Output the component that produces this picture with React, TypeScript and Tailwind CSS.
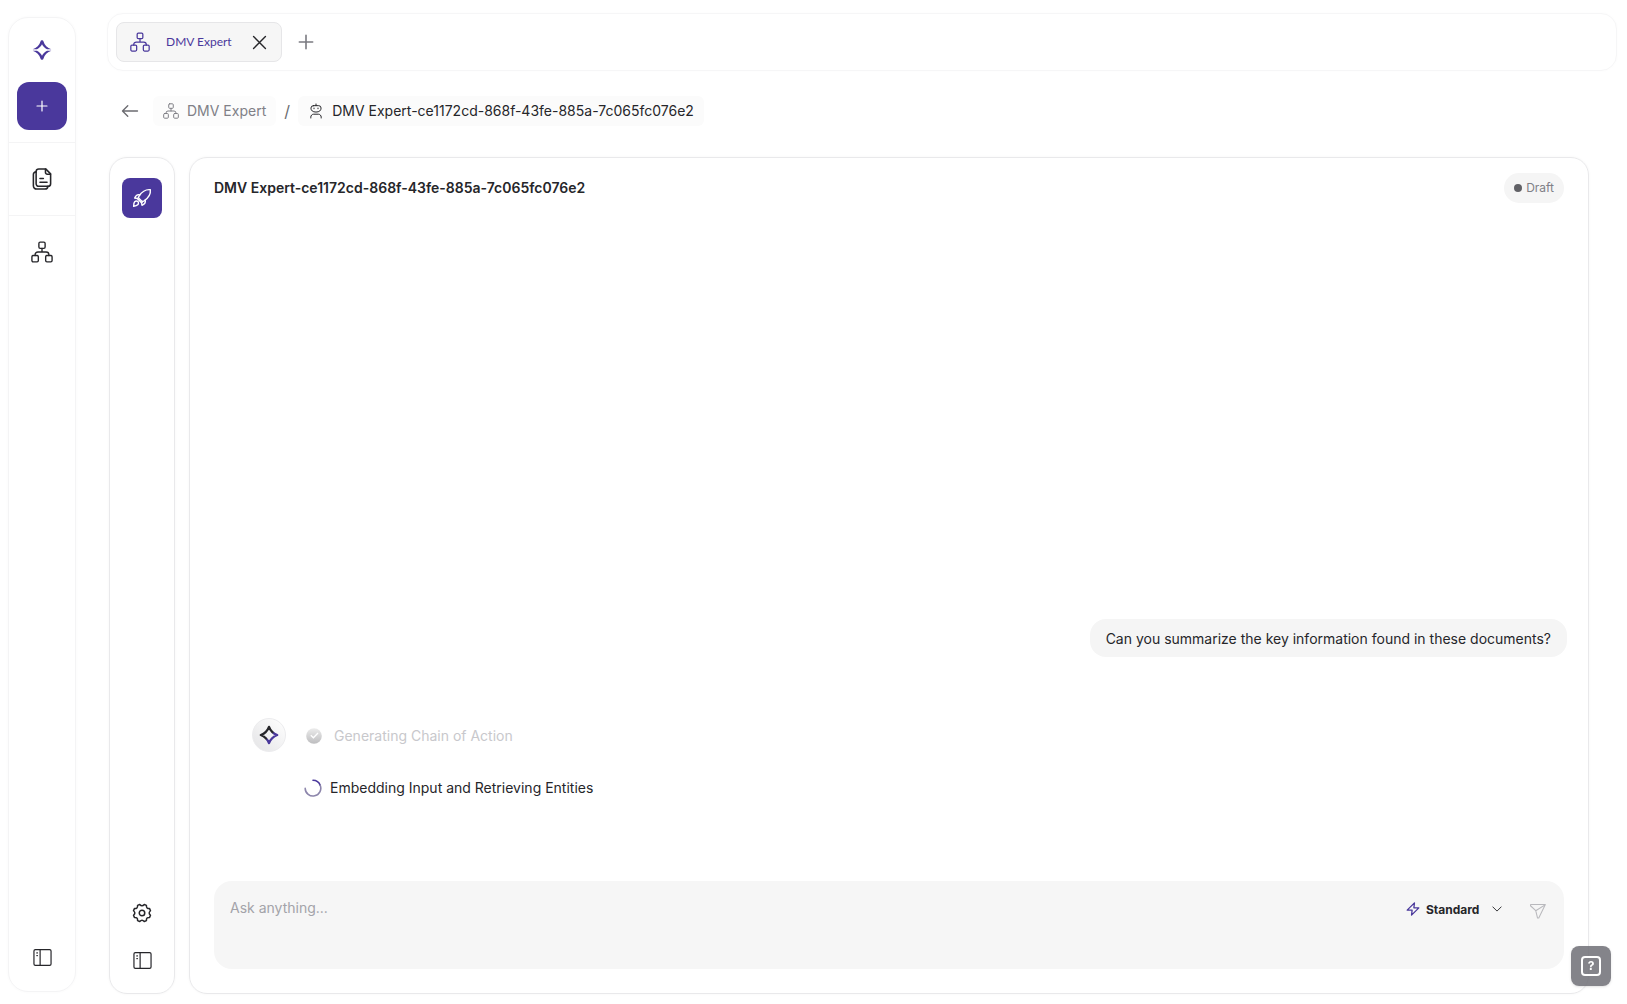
import type { ReactNode } from 'react';

type IconProps = { className?: string };

function Stroke({ className, width = 1.5, children }: IconProps & { width?: number; children: ReactNode }) {
  return (
    <svg
      viewBox="0 0 24 24"
      fill="none"
      stroke="currentColor"
      strokeWidth={width}
      strokeLinecap="round"
      strokeLinejoin="round"
      className={className}
      aria-hidden="true"
    >
      {children}
    </svg>
  );
}

function NetworkIcon({ className }: IconProps) {
  return (
    <Stroke className={className}>
      <rect x="8.6" y="1.2" width="6.8" height="6.8" rx="1.4" />
      <rect x="1" y="15.8" width="7" height="7" rx="1.4" />
      <rect x="16" y="15.8" width="7" height="7" rx="1.4" />
      <path d="M12 8v4M4.5 15.8V15a3 3 0 0 1 3-3h9a3 3 0 0 1 3 3v.8" />
    </Stroke>
  );
}

function DocsIcon({ className }: IconProps) {
  return (
    <Stroke className={className} width={1.7}>
      <path d="M16 1H8.400A2.800 2.800 0 0 0 5.600 3.800v13.400A2.800 2.800 0 0 0 8.400 20h10.200a2.800 2.800 0 0 0 2.800-2.800V6.400z" />
      <path d="M15.800 1.200v3.600a2 2 0 0 0 2 2h3.400M9.800 11.400h3.700M9.800 15.600h7.700" />
      <path d="M5.600 4.200a2.900 2.900 0 0 0-3 2.900v12.300A3.500 3.500 0 0 0 6.100 23h9.300a3.200 3.200 0 0 0 3-3" />
    </Stroke>
  );
}

function PanelIcon({ className }: IconProps) {
  return (
    <Stroke className={className}>
      <rect x="1.2" y="2" width="21.6" height="20" rx="1.8" />
      <path d="M9 2v20" />
      <path d="M4.8 6.2h.8M4.8 9.6h.8" />
    </Stroke>
  );
}

function RobotIcon({ className }: IconProps) {
  return (
    <Stroke className={className}>
      <path d="M8 4h8a3.600 3.600 0 0 1 3.600 3.600c0 3.600-2.600 6-7.600 6s-7.600-2.400-7.600-6A3.600 3.600 0 0 1 8 4z" />
      <path d="M12 1.500V4M9 7.600v1M15 7.600v1" />
      <path d="M4.200 22.500v-1.300c0-2.400 1.800-4.400 4.200-4.400h7.200c2.400 0 4.200 2 4.200 4.400v1.300" />
    </Stroke>
  );
}

function RocketIcon({ className }: IconProps) {
  return (
    <Stroke className={className} width={1.7}>
      <path d="M22 2c-5-.6-9.600 1.800-13.400 7.400L7.600 11.600l4.800 4.800 2.200-1C20.200 11.600 22.600 7 22 2z" />
      <path d="M9.400 8.200C6.800 7.400 4.600 8.800 3.200 12l3.200.6M15.800 14.600c.8 2.600-.6 4.800-3.800 6.200l-.6-3.200" />
      <path d="M6.400 12.600l5 5 1.400-1.400M3.200 16.600c1.200-1.200 3-1.200 3.900-.3s.9 2.700-.3 3.900C5.600 21.400 2 22 2 22s0-4.200 1.200-5.400z" />
    </Stroke>
  );
}

function GearIcon({ className }: IconProps) {
  return (
    <Stroke className={className} width={1.8}>
      <path d="M9.300 1.800Q12 5 14.700 1.800L17.300 2.900Q17 7 21.100 6.700L22.200 9.300Q19 12 22.200 14.700L21.100 17.300Q17 17 17.300 21.100L14.700 22.200Q12 19 9.300 22.200L6.700 21.100Q7 17 2.900 17.300L1.800 14.700Q5 12 1.800 9.300L2.900 6.700Q7 7 6.700 2.900z" />
      <circle cx="12" cy="12" r="3.300" />
    </Stroke>
  );
}

function Sparkle({ className }: IconProps) {
  return (
    <svg viewBox="0 0 24 24" fill="currentColor" className={className} aria-hidden="true">
      <path d="M.8 11.200C5.600 9.800 9 6.200 10.300 1.600c.4-1.600 3-1.600 3.400 0C15 6.200 18.400 9.800 23.200 11.200H18C15.200 9.600 13.200 7.600 12 5.200 10.800 7.600 8.800 9.600 6 11.200z" />
      <path d="M.8 12.800C5.600 14.200 9 17.800 10.300 22.400c.4 1.600 3 1.600 3.400 0C15 17.800 18.400 14.200 23.200 12.800H18C15.200 14.400 13.200 16.400 12 18.800 10.800 16.400 8.800 14.400 6 12.800z" />
    </svg>
  );
}

function AvatarMark({ className }: IconProps) {
  return (
    <svg viewBox="0 0 24 24" className={className} aria-hidden="true">
      <defs>
        <linearGradient id="avatar-mark" x1="0" y1="0" x2="1" y2="1">
          <stop offset="0.52" stopColor="#26262a" />
          <stop offset="0.6" stopColor="#4a389c" />
        </linearGradient>
      </defs>
      <path
        fill="none"
        stroke="url(#avatar-mark)"
        strokeWidth="2.8"
        strokeLinejoin="round"
        d="M12 2.200C13.800 7 17 10.200 21.800 12 17 13.800 13.800 17 12 21.800 10.200 17 7 13.800 2.200 12 7 10.200 10.200 7 12 2.200z"
      />
    </svg>
  );
}

function Sidebar() {
  return (
    <aside className="flex w-[68px] shrink-0 flex-col items-center rounded-[20px] border border-[#f4f4f5] shadow-[0_0_3px_rgba(0,0,0,0.03)]">
      <a href="#home" aria-label="Home" className="mt-[22px] text-[#4a389c]">
        <Sparkle className="size-5" />
      </a>
      <button
        aria-label="New"
        className="mt-[22px] flex h-12 w-[50px] items-center justify-center rounded-xl bg-[#4a389c] text-white"
      >
        <Stroke className="size-3" width={2.4}>
          <path d="M12 2v20M2 12h20" />
        </Stroke>
      </button>
      <nav className="mt-3 flex w-full flex-col text-[#26262a]">
        <a href="#documents" aria-label="Documents" className="flex h-[74px] items-center justify-center border-y border-[#f4f4f5]">
          <DocsIcon className="size-[22px]" />
        </a>
        <a href="#workflows" aria-label="Workflows" className="flex h-[72px] items-center justify-center">
          <NetworkIcon className="size-[22px]" />
        </a>
      </nav>
      <button aria-label="Toggle sidebar" className="mt-auto mb-6 text-[#26262a]">
        <PanelIcon className="size-[19px]" />
      </button>
    </aside>
  );
}

function TabBar() {
  return (
    <header className="flex h-[58px] items-center rounded-[16px] border border-[#f6f6f7] px-2 shadow-[0_0_3px_rgba(0,0,0,0.02)]">
      <div className="flex h-10 items-center rounded-lg border border-[#e6e6e8] bg-[#f6f6f6] pr-[14px] pl-[13px]">
        <button className="flex items-center gap-4 font-['Lato',sans-serif] text-xs text-[#4a389c]">
          <NetworkIcon className="size-5" />
          DMV Expert
        </button>
        <button aria-label="Close tab" className="ml-5 text-[#26262a]">
          <Stroke className="size-[15px]" width={2.2}>
            <path d="M2.5 2.5l19 19M21.5 2.5l-19 19" />
          </Stroke>
        </button>
      </div>
      <button aria-label="Add tab" className="ml-4 text-[#7a7a80]">
        <Stroke className="size-4" width={2.4}>
          <path d="M12 2v20M2 12h20" />
        </Stroke>
      </button>
    </header>
  );
}

function Breadcrumb() {
  return (
    <nav aria-label="Breadcrumb" className="mt-[25px] flex h-[30px] items-center pl-[14px] text-sm">
      <button aria-label="Back" className="text-[#6b6b70]">
        <Stroke className="size-[18px]" width={1.8}>
          <path d="M22 12H2.5M9 5l-7 7 7 7" />
        </Stroke>
      </button>
      <a href="#workflow" className="ml-[14px] flex h-full items-center gap-2 rounded-md bg-[#fcfcfc] px-[10px] text-[#808087]">
        <NetworkIcon className="size-4" />
        DMV Expert
      </a>
      <span className="w-[22px] text-center text-base text-[#6b6b70]">/</span>
      <a href="#agent" aria-current="page" className="flex h-full items-center gap-2 rounded-md bg-[#fbfbfb] px-[10px] text-[#26262a]">
        <RobotIcon className="size-4" />
        DMV Expert-ce1172cd-868f-43fe-885a-7c065fc076e2
      </a>
    </nav>
  );
}

function ToolRail() {
  return (
    <aside className="flex w-[66px] shrink-0 flex-col items-center rounded-[18px] border border-[#e9e9eb] pt-5 pb-[23px] text-[#26262a] shadow-[0_0_3px_rgba(0,0,0,0.04)]">
      <button aria-label="Run" className="flex size-10 items-center justify-center rounded-lg bg-[#4a389c] text-white">
        <RocketIcon className="size-5" />
      </button>
      <button aria-label="Settings" className="mt-auto">
        <GearIcon className="size-5" />
      </button>
      <button aria-label="Toggle panel" className="mt-7">
        <PanelIcon className="size-[19px]" />
      </button>
    </aside>
  );
}

function Progress() {
  return (
    <div className="mt-[61px] flex gap-[18px] pl-[38px]">
      <div className="flex size-[34px] shrink-0 items-center justify-center rounded-full border border-[#ececee] bg-linear-to-tr from-[#e4e4e6] to-white">
        <AvatarMark className="size-5" />
      </div>
      <ul className="flex flex-col gap-8 text-sm">
        <li className="flex items-center gap-3 pt-2 text-[#c8c8cc]">
          <svg viewBox="0 0 16 16" className="ml-[2px] size-4 shrink-0" aria-hidden="true">
            <defs>
              <linearGradient id="done" x1="0" y1="0" x2="0" y2="1">
                <stop offset="0" stopColor="#ececec" />
                <stop offset="1" stopColor="#bdbdbf" />
              </linearGradient>
            </defs>
            <circle cx="8" cy="8" r="7.8" fill="url(#done)" />
            <path d="M4.800 7.200l2.600 2.600 4.600-4.800" fill="none" stroke="#fff" strokeWidth="1.3" />
          </svg>
          Generating Chain of Action
        </li>
        <li className="flex items-center gap-2 text-[#26262a]">
          <svg viewBox="0 0 18 18" className="size-[18px] shrink-0" aria-hidden="true" fill="none" strokeWidth="1.6" strokeLinecap="round">
            <path d="M9 1.200a7.800 7.800 0 0 1 7.200 5" stroke="#4a389c" />
            <path d="M16.200 6.200A7.800 7.800 0 1 1 1.200 9.400" stroke="#8c85ab" />
          </svg>
          Embedding Input and Retrieving Entities
        </li>
      </ul>
    </div>
  );
}

function Composer() {
  return (
    <form className="flex h-[88px] items-start rounded-[18px] bg-[#f6f6f6] px-4 pt-4" onSubmit={(e) => e.preventDefault()}>
      <textarea
        aria-label="Message"
        placeholder="Ask anything..."
        className="h-14 min-w-0 flex-1 resize-none bg-transparent text-sm leading-[22px] outline-none placeholder:text-[#a3a3a9]"
      />
      <div className="flex h-6 items-center text-[#26262a]">
        <Stroke className="size-[14px] text-[#4a389c]" width={2.2}>
          <path d="M14.500 1.500L2 14h8.500l-1 8.500L22 10h-8.500z" />
        </Stroke>
        <div className="relative ml-[6px]">
          <select aria-label="Mode" className="h-6 w-20 appearance-none bg-transparent text-xs font-bold outline-none">
            <option>Standard</option>
          </select>
          <Stroke className="pointer-events-none absolute top-2 right-1 size-[10px]" width={2.2}>
            <path d="M2 7l10 10L22 7" />
          </Stroke>
        </div>
        <button aria-label="Send" className="mt-1 mr-px ml-[23px] text-[#b9b9bd]">
          <Stroke className="size-[18px]" width={1.4}>
            <path d="M2.200 3.200h19.600L13 21.400h-1.600L9 11.600 2 5zM9 11.600l12.400-7.800" />
          </Stroke>
        </button>
      </div>
    </form>
  );
}

function ChatPanel() {
  return (
    <section className="flex min-w-0 flex-1 flex-col rounded-[18px] border border-[#e9e9eb] px-6 pt-[15px] pb-6 shadow-[0_0_3px_rgba(0,0,0,0.04)]">
      <div className="flex items-center justify-between">
        <h1 className="text-sm font-semibold text-[#26262a]">DMV Expert-ce1172cd-868f-43fe-885a-7c065fc076e2</h1>
        <span className="flex h-[30px] items-center gap-1 rounded-full bg-[#f5f5f5] px-[10px] text-xs text-[#808087]">
          <span className="size-2 rounded-full bg-[#616166]" />
          Draft
        </span>
      </div>
      <div className="flex flex-1 flex-col justify-end pb-[83px]">
        <p className="-mr-[3px] self-end rounded-2xl bg-[#f5f5f5] px-4 pt-[10px] pb-2 text-sm text-[#26262a]">
          Can you summarize the key information found in these documents?
        </p>
        <Progress />
      </div>
      <Composer />
    </section>
  );
}

export default function App() {
  return (
    <div className="flex min-h-screen bg-white pt-[13px] pr-[10px] pb-[10px] pl-2 font-['Inter',sans-serif]">
      <div className="flex pt-1 pb-[2px]">
        <Sidebar />
      </div>
      <main className="ml-[31px] flex min-w-0 flex-1 flex-col">
        <TabBar />
        <Breadcrumb />
        <div className="mt-[31px] mr-7 ml-[2px] flex flex-1 gap-[14px]">
          <ToolRail />
          <ChatPanel />
        </div>
      </main>
      <button
        aria-label="Help"
        className="fixed right-4 bottom-[18px] flex size-10 items-center justify-center rounded-lg bg-[#6f6f75]/85 text-white shadow-sm"
      >
        <span className="flex size-5 items-center justify-center rounded-sm border-2 border-white text-xs font-bold">?</span>
      </button>
    </div>
  );
}
